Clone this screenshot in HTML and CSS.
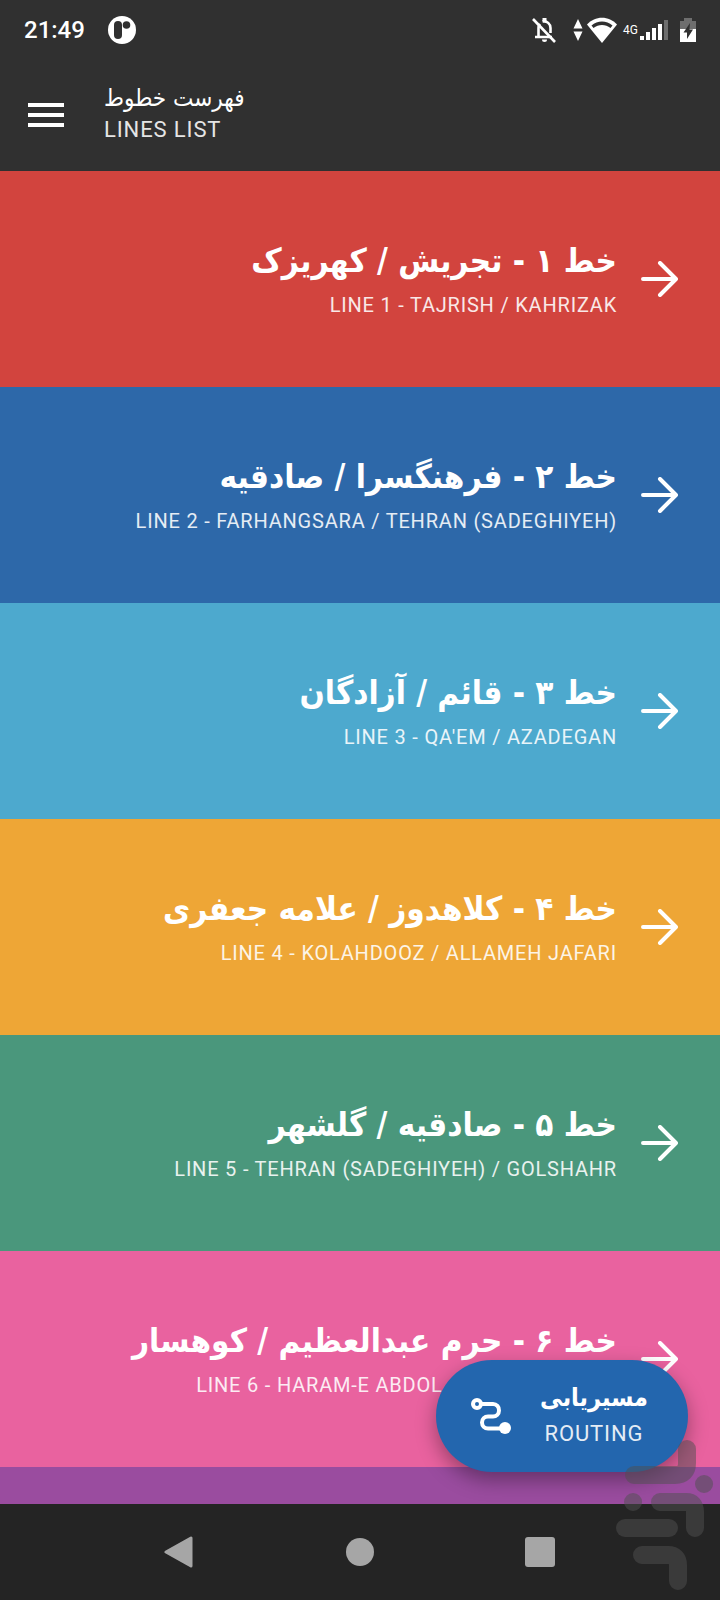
FILE: index.html
```html
<!DOCTYPE html>
<html lang="fa">
<head>
  <meta charset="UTF-8">
  <meta name="viewport" content="width=device-width, initial-scale=1">
  <title>فهرست خطوط</title>
  <link rel="stylesheet" href="styles.css">
</head>
<body>

  <header>
    <div class="status-bar">
      <span class="clock">21:49</span>
      <svg class="notice" width="28" height="28" viewBox="0 0 28 28">
        <circle cx="14" cy="14" r="14" fill="#fff"/>
        <rect x="6" y="5" width="8" height="18" rx="4" fill="#303030"/>
        <circle cx="18.500" cy="9" r="3.800" fill="#303030"/>
      </svg>
      <div class="status-icons">
        <svg class="bell" width="24" height="26" viewBox="0 0 24 26" fill="none" stroke="#fff" stroke-width="2.600">
          <path d="M3 20h17M6.500 20v-9a6 6 0 0 1 1.500-4M10.500 4.600C15 3.500 18.500 7 18.500 11v5"/>
          <path d="M12.500 1v3" stroke-width="4"/>
          <path d="M10 22.500h5a2.500 2.500 0 0 1-5 0z" fill="#fff" stroke="none"/>
          <path d="M1 2L23 25"/>
        </svg>
        <svg class="traffic" width="10" height="22" viewBox="0 0 10 22" fill="#fff">
          <path d="M5 0l4.500 9.500h-9zM5 22l4.500-9.500h-9z"/>
        </svg>
        <svg class="wifi" width="30" height="26" viewBox="0 0 30 26">
          <path d="M0 7.500C8-1.500 22-1.500 30 7.500L15 26z" fill="#fff"/>
          <path d="M4.500 8.500c6-5.500 15-5.500 21 0L23.500 11c-5-4-12-4-17 0z" fill="#303030"/>
        </svg>
        <span class="network">4G</span>
        <svg class="signal" width="28" height="20" viewBox="0 0 28 20" fill="#fff">
          <rect x="0" y="16" width="4" height="4"/>
          <rect x="6" y="12" width="4" height="8"/>
          <rect x="12" y="8" width="4" height="12"/>
          <rect x="18" y="4" width="4" height="16"/>
          <rect x="24" y="0" width="4" height="20" fill="#6e6e6e"/>
        </svg>
        <svg class="battery" width="16" height="24" viewBox="0 0 16 24">
          <path d="M4 3V0h8v3h4v21H0V3z" fill="#6e6e6e"/>
          <path d="M0 11h16v13H0z" fill="#fff"/>
          <path d="M10 5L3.500 14.500H7V21l6-9.500H9.500z" fill="#303030"/>
        </svg>
      </div>
    </div>

    <div class="app-bar">
      <button class="menu" type="button" aria-label="Menu">
        <svg width="36" height="24" viewBox="0 0 36 24" fill="#fff">
          <path d="M0 0h36v4H0zM0 10h36v4H0zM0 20h36v4H0z"/>
        </svg>
      </button>
      <h1>
        <span class="fa" dir="rtl">فهرست خطوط</span>
        <span class="en" lang="en">LINES LIST</span>
      </h1>
    </div>
  </header>

  <main>
    <nav class="lines">
      <a class="line red" href="#line1">
        <span class="names">
          <span class="fa" dir="rtl">خط ۱ - تجریش / کهریزک</span>
          <span class="en" lang="en">LINE 1 - TAJRISH / KAHRIZAK</span>
        </span>
        <svg class="arrow" viewBox="0 0 37 36"><path d="M2 18h32M19 2l16 16-16 16"/></svg>
      </a>
      <a class="line blue" href="#line2">
        <span class="names">
          <span class="fa" dir="rtl">خط ۲ - فرهنگسرا / صادقیه</span>
          <span class="en" lang="en">LINE 2 - FARHANGSARA / TEHRAN (SADEGHIYEH)</span>
        </span>
        <svg class="arrow" viewBox="0 0 37 36"><path d="M2 18h32M19 2l16 16-16 16"/></svg>
      </a>
      <a class="line sky" href="#line3">
        <span class="names">
          <span class="fa" dir="rtl">خط ۳ - قائم / آزادگان</span>
          <span class="en" lang="en">LINE 3 - QA'EM / AZADEGAN</span>
        </span>
        <svg class="arrow" viewBox="0 0 37 36"><path d="M2 18h32M19 2l16 16-16 16"/></svg>
      </a>
      <a class="line orange" href="#line4">
        <span class="names">
          <span class="fa" dir="rtl">خط ۴ - کلاهدوز / علامه جعفری</span>
          <span class="en" lang="en">LINE 4 - KOLAHDOOZ / ALLAMEH JAFARI</span>
        </span>
        <svg class="arrow" viewBox="0 0 37 36"><path d="M2 18h32M19 2l16 16-16 16"/></svg>
      </a>
      <a class="line green" href="#line5">
        <span class="names">
          <span class="fa" dir="rtl">خط ۵ - صادقیه / گلشهر</span>
          <span class="en" lang="en">LINE 5 - TEHRAN (SADEGHIYEH) / GOLSHAHR</span>
        </span>
        <svg class="arrow" viewBox="0 0 37 36"><path d="M2 18h32M19 2l16 16-16 16"/></svg>
      </a>
      <a class="line pink" href="#line6">
        <span class="names">
          <span class="fa" dir="rtl">خط ۶ - حرم عبدالعظیم / کوهسار</span>
          <span class="en" lang="en">LINE 6 - HARAM-E ABDOL AZIM / KOOHSAR</span>
        </span>
        <svg class="arrow" viewBox="0 0 37 36"><path d="M2 18h32M19 2l16 16-16 16"/></svg>
      </a>
      <a class="line purple" href="#line7" aria-label="Line 7"></a>
    </nav>

    <button class="routing" type="button">
      <svg width="42" height="38" viewBox="0 0 42 38" fill="none" stroke="#fff" stroke-width="4">
        <circle cx="7" cy="7" r="4"/>
        <path d="M11 7h12a6 6 0 0 1 6 6.500a6 6 0 0 1-6 6h-5a6 6 0 0 0-6 6a6 6 0 0 0 6 6h16"/>
        <circle cx="35" cy="31" r="6" fill="#fff" stroke="none"/>
      </svg>
      <span class="label">
        <span class="fa" dir="rtl">مسیریابی</span>
        <span class="en" lang="en">ROUTING</span>
      </span>
    </button>
  </main>

  <footer class="system-nav">
    <button type="button" aria-label="Back">
      <svg width="32" height="32" viewBox="0 0 32 32"><path d="M27 2v28L2 16z" stroke="#a6a6a6" stroke-width="3" stroke-linejoin="round"/></svg>
    </button>
    <button type="button" aria-label="Home">
      <svg width="32" height="32" viewBox="0 0 32 32"><circle cx="16" cy="16" r="14"/></svg>
    </button>
    <button type="button" aria-label="Recent apps">
      <svg width="32" height="32" viewBox="0 0 32 32"><rect x="1" y="1" width="30" height="30" rx="3"/></svg>
    </button>
  </footer>

  <svg class="watermark" width="104" height="160" viewBox="616 1440 104 160" aria-hidden="true">
    <g fill="none" stroke="#505050" stroke-width="18" stroke-linecap="round">
      <path d="M687 1449v14q0 12-12 12h-41"/>
      <path d="M660 1502h26q9 0 9 10v16"/>
      <path d="M625 1528h44"/>
      <path d="M642 1555h26q10 0 10 10v16"/>
      <path d="M704 1484h.1M633 1502h.1"/>
    </g>
  </svg>

</body>
</html>
```
FILE: styles.css
```css
* {
  box-sizing: border-box;
}

body {
  margin: 0;
  height: 100vh;
  display: flex;
  flex-direction: column;
  position: relative;
  overflow: hidden;
  background-color: #242424;
  color: #fff;
  font-family: Roboto, "DejaVu Sans", sans-serif;
}

button {
  padding: 0;
  border: none;
  background: none;
  color: inherit;
  font: inherit;
  cursor: pointer;
}

svg {
  display: block;
  flex: none;
}

.fa {
  font-family: "DejaVu Sans Condensed", "DejaVu Sans", sans-serif;
  font-weight: 700;
  white-space: nowrap;
}

.en {
  letter-spacing: 0.04em;
  opacity: 0.88;
  white-space: nowrap;
}

/* Status bar and title */
header {
  flex: none;
  background-color: #303030;
}

.status-bar {
  display: flex;
  align-items: center;
  height: 60px;
  padding: 0 24px;
}

.clock {
  font-size: 24px;
  font-weight: 500;
}

.notice {
  margin-left: 23px;
}

.status-icons {
  display: flex;
  align-items: center;
  margin-left: auto;
}

.traffic {
  margin-left: 17px;
}

.wifi {
  margin-left: 4px;
}

.network {
  margin: 0 2px 0 6px;
  font-size: 12px;
}

.battery {
  margin-left: 12px;
}

.app-bar {
  display: flex;
  align-items: center;
  height: 111px;
  padding: 0 28px 2px;
  gap: 40px;
}

h1 {
  display: flex;
  flex-direction: column;
  align-items: flex-start;
  margin: 0;
  padding-bottom: 2px;
  font-size: 22px;
  font-weight: 400;
  line-height: 32px;
}

h1 .fa {
  font-size: 24px;
  font-weight: 400;
}

/* Metro lines */
main {
  flex: 1;
  min-height: 0;
  position: relative;
  overflow: hidden;
}

.line {
  display: flex;
  align-items: center;
  justify-content: flex-end;
  gap: 24px;
  height: 216px;
  padding: 0 42px 0 24px;
  color: #fff;
  text-decoration: none;
}

.names {
  display: flex;
  flex-direction: column;
  align-items: flex-end;
  padding-top: 4px;
}

.names .fa {
  font-size: 33px;
  line-height: 48px;
}

.names .en {
  font-size: 20px;
  line-height: 40px;
}

.arrow {
  width: 37px;
  height: 36px;
  fill: none;
  stroke: #fff;
  stroke-width: 4;
  stroke-linecap: round;
  stroke-linejoin: round;
}

.red { background-color: #d2443e; }
.blue { background-color: #2d68a9; }
.sky { background-color: #4da9ce; }
.orange { background-color: #eea636; }
.green { background-color: #4a977c; }
.pink { background-color: #e9629f; }
.purple { background-color: #9a4c9f; }

.routing {
  position: absolute;
  right: 32px;
  bottom: 32px;
  display: flex;
  align-items: center;
  gap: 28px;
  height: 112px;
  padding: 0 40px 0 34px;
  border-radius: 56px;
  background-color: #2366ae;
  box-shadow: 0 8px 20px rgba(0, 0, 0, 0.35);
}

.label {
  display: flex;
  flex-direction: column;
  align-items: center;
  font-size: 22px;
  line-height: 36px;
}

.label .fa {
  font-size: 25px;
}

/* Android navigation */
.system-nav {
  flex: none;
  display: flex;
  align-items: center;
  justify-content: center;
  gap: 148px;
  height: 96px;
  background-color: #242424;
}

.system-nav svg {
  fill: #a6a6a6;
}

.watermark {
  position: absolute;
  right: 0;
  bottom: 0;
  opacity: 0.5;
  pointer-events: none;
}
```
